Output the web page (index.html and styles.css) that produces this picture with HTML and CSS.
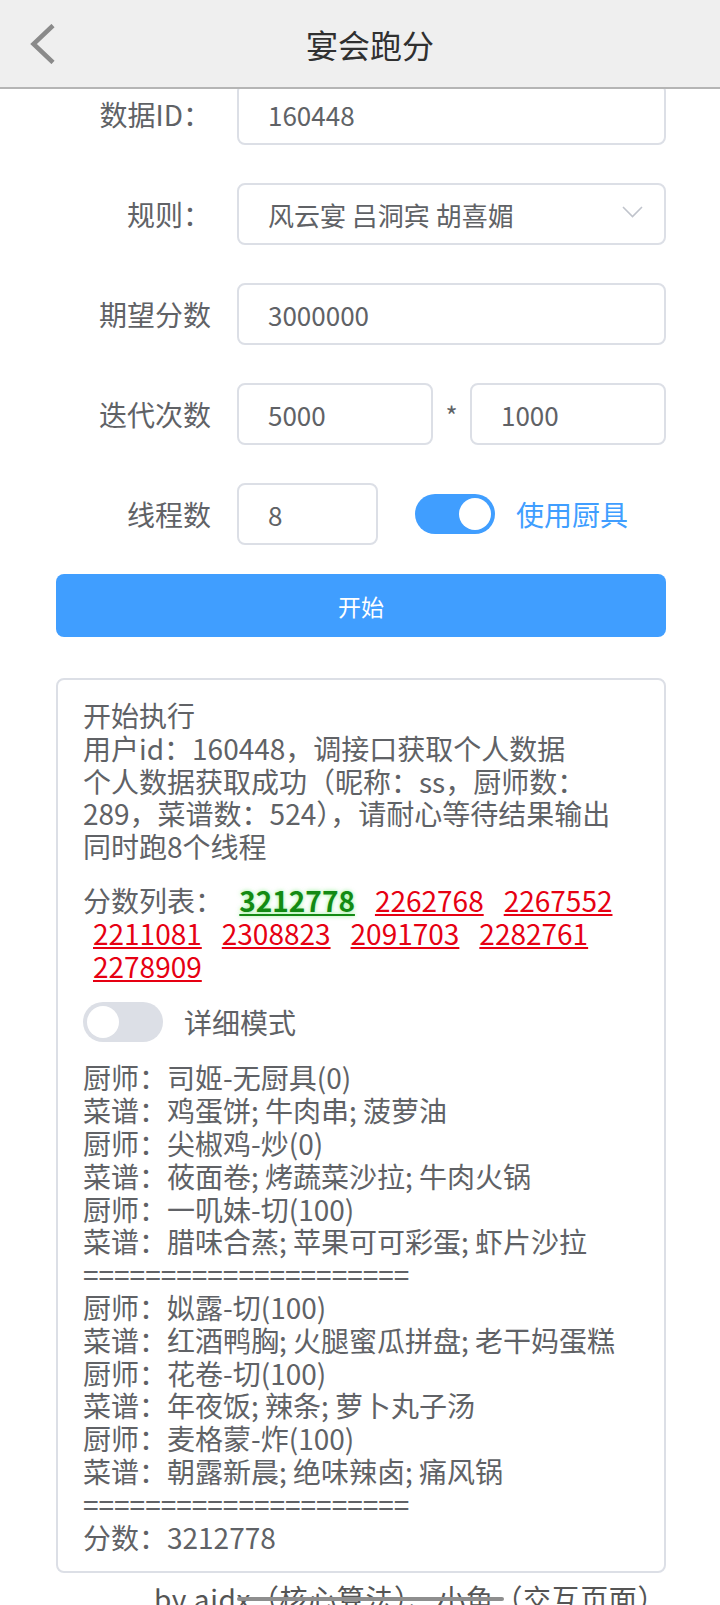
FILE: index.html
```html
<!DOCTYPE html>
<html lang="zh-CN">
<head>
<meta charset="utf-8">
<title>宴会跑分</title>
<link rel="stylesheet" href="styles.css">
</head>
<body>
<header class="topbar">
  <div class="back">
    <svg width="26" height="40" viewBox="0 0 26 40"><polyline points="23,1.5 3.5,20 23,38.5" fill="none" stroke="#8a8a8a" stroke-width="4.5"/></svg>
  </div>
  <div class="title">宴会跑分</div>
  <div class="spacer"></div>
</header>

<main class="page">
  <div class="row">
    <div class="lbl">数据ID：</div>
    <div class="field">160448</div>
  </div>
  <div class="row">
    <div class="lbl">规则：</div>
    <div class="field select">
      <span>风云宴 吕洞宾 胡喜媚</span>
      <svg class="chev" width="21" height="12" viewBox="0 0 21 12"><polyline points="1,1 10.5,10.5 20,1" fill="none" stroke="#c0c4cc" stroke-width="1.6"/></svg>
    </div>
  </div>
  <div class="row">
    <div class="lbl">期望分数</div>
    <div class="field">3000000</div>
  </div>
  <div class="row">
    <div class="lbl">迭代次数</div>
    <div class="field">5000</div>
    <div class="star">*</div>
    <div class="field">1000</div>
  </div>
  <div class="row last">
    <div class="lbl">线程数</div>
    <div class="field small">8</div>
    <div class="switch on"><span class="knob"></span></div>
    <div class="use">使用厨具</div>
  </div>

  <div class="start">开始</div>

  <section class="panel">
    <div class="log">
      <div>开始执行</div>
      <div>用户id：160448，调接口获取个人数据</div>
      <div>个人数据获取成功（昵称：ss，厨师数：289，菜谱数：524），请耐心等待结果输出</div>
      <div>同时跑8个线程</div>
    </div>
    <div class="scores">分数列表： <a class="num best">3212778</a><a class="num">2262768</a><a class="num">2267552</a><a class="num">2211081</a><a class="num">2308823</a><a class="num">2091703</a><a class="num">2282761</a><a class="num">2278909</a></div>
    <div class="detail">
      <div class="switch off"><span class="knob"></span></div>
      <div class="detail-label">详细模式</div>
    </div>
    <div class="result">
      <div>厨师：司姬-无厨具(0)</div>
      <div>菜谱：鸡蛋饼; 牛肉串; 菠萝油</div>
      <div>厨师：尖椒鸡-炒(0)</div>
      <div>菜谱：莜面卷; 烤蔬菜沙拉; 牛肉火锅</div>
      <div>厨师：一叽妹-切(100)</div>
      <div>菜谱：腊味合蒸; 苹果可可彩蛋; 虾片沙拉</div>
      <div>=====================</div>
      <div>厨师：姒露-切(100)</div>
      <div>菜谱：红酒鸭胸; 火腿蜜瓜拼盘; 老干妈蛋糕</div>
      <div>厨师：花卷-切(100)</div>
      <div>菜谱：年夜饭; 辣条; 萝卜丸子汤</div>
      <div>厨师：麦格蒙-炸(100)</div>
      <div>菜谱：朝露新晨; 绝味辣卤; 痛风锅</div>
      <div>=====================</div>
      <div>分数：3212778</div>
    </div>
  </section>

  <footer class="credit">by aidx（核心算法）、小鱼（交互页面）</footer>
</main>

<div class="gesture"></div>
</body>
</html>
```

FILE: styles.css
```css
html {
  overflow: hidden;
}

body {
  margin: 0;
  height: 1605px;
  overflow: hidden;
  background: #ffffff;
  font-family: "Noto Sans CJK SC", "Noto Sans", sans-serif;
  color: #606266;
}

.topbar {
  position: fixed;
  top: 0;
  left: 0;
  right: 0;
  height: 87px;
  background: #efefef;
  border-bottom: 2px solid #b5b5b5;
  display: flex;
  align-items: center;
  z-index: 10;
}

.back {
  width: 60px;
  flex: none;
  box-sizing: border-box;
  padding-left: 30px;
  display: flex;
  align-items: center;
}

.title {
  flex: 1;
  text-align: center;
  font-size: 32px;
  color: #303030;
}

.spacer {
  width: 40px;
  flex: none;
}

.page {
  padding: 83px 54px 0 56px;
}

.row {
  display: flex;
  align-items: center;
  height: 62px;
  margin-bottom: 38px;
}

.row.last {
  margin-bottom: 29px;
}

.lbl {
  width: 155px;
  flex: none;
  margin-right: 26px;
  text-align: right;
  font-size: 28px;
  color: #606266;
  white-space: nowrap;
}

.field {
  flex: 1;
  min-width: 0;
  height: 62px;
  box-sizing: border-box;
  border: 2px solid #dcdfe6;
  border-radius: 8px;
  padding: 0 21px 0 29px;
  display: flex;
  align-items: center;
  font-size: 26px;
  color: #606266;
}

.field.select {
  justify-content: space-between;
}

.chev {
  margin-top: -5px;
}

.star {
  width: 37px;
  flex: none;
  text-align: center;
  font-size: 26px;
  color: #606266;
}

.field.small {
  flex: none;
  width: 141px;
  margin-right: 37px;
}

.switch {
  width: 80px;
  height: 40px;
  flex: none;
  box-sizing: border-box;
  border-radius: 20px;
  padding: 4px;
  display: flex;
  align-items: center;
}

.switch.on {
  background: #409eff;
  justify-content: flex-end;
}

.switch.off {
  background: #dcdfe6;
  justify-content: flex-start;
}

.knob {
  width: 32px;
  height: 32px;
  border-radius: 50%;
  background: #ffffff;
}

.use {
  margin-left: 21px;
  font-size: 28px;
  color: #409eff;
}

.start {
  height: 63px;
  border-radius: 8px;
  background: #409eff;
  color: #ffffff;
  font-size: 23px;
  display: flex;
  align-items: center;
  justify-content: center;
}

.panel {
  margin-top: 41px;
  border: 2px solid #dcdfe6;
  border-radius: 8px;
  padding: 19px 24px 18px 25px;
  font-size: 28px;
  line-height: 32.8px;
  color: #606266;
}

.scores {
  margin-top: 21px;
}

.num {
  display: inline-block;
  margin: 0 10px;
  color: #e60012;
  text-decoration: underline;
  text-decoration-thickness: 2px;
  text-underline-offset: 2px;
}

.num.best {
  color: #138a13;
  font-weight: bold;
  text-shadow: 0 0 4px rgba(60, 230, 60, 0.55);
}

.detail {
  margin-top: 20px;
  display: flex;
  align-items: center;
}

.detail-label {
  margin-left: 21px;
}

.result {
  margin-top: 19px;
}

.credit {
  margin-top: 9px;
  text-align: right;
  font-size: 28px;
  line-height: 33px;
  letter-spacing: 0.6px;
  color: #555555;
  white-space: nowrap;
}

.gesture {
  position: fixed;
  left: 237px;
  bottom: 4px;
  width: 267px;
  height: 4px;
  border-radius: 2px;
  background: #8e8e8e;
  z-index: 20;
}
```
